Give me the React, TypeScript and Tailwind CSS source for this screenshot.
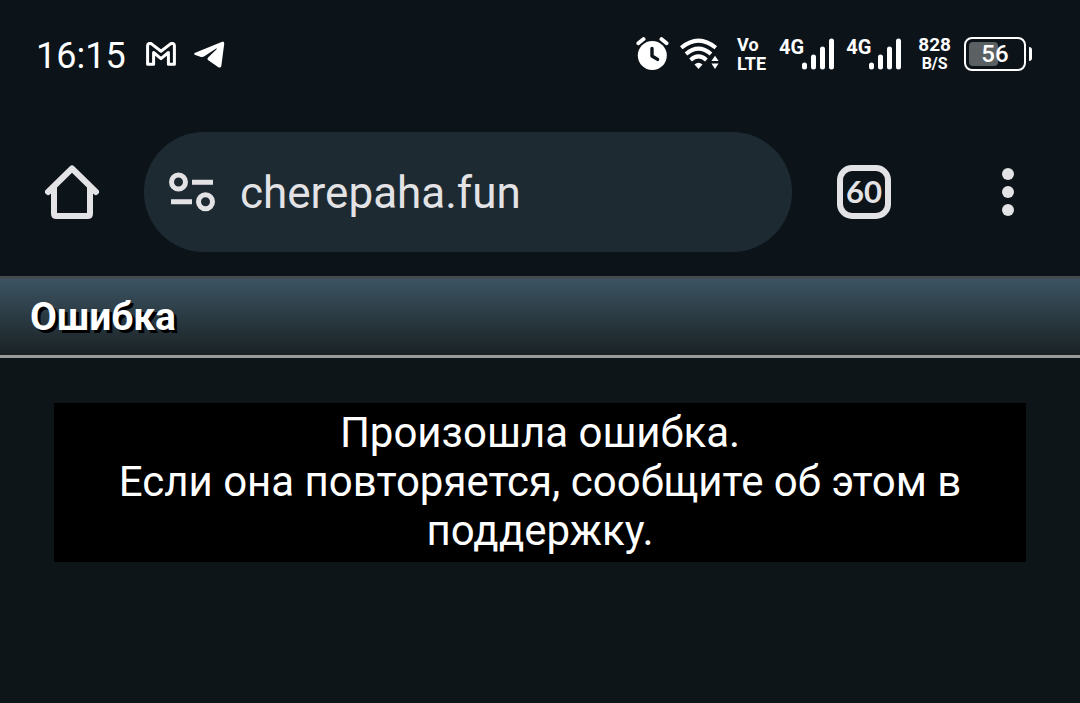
import { useState } from "react";

const GmailIcon = () => (
  <svg width="30" height="24" viewBox="0 0 30 24" fill="none" stroke="white" strokeWidth="3" strokeLinejoin="round">
    <path d="M1.6 3.5V22.3H7.6V10.5L15 16.6L22.4 10.5V22.3H28.4V3.5C28.4 1.4 25.8 .8 24.2 2.1L15 9.3L5.8 2.1C4.2 .8 1.6 1.4 1.6 3.5Z" />
  </svg>
);

const TelegramIcon = () => (
  <svg width="31" height="27" viewBox="0 0 31 27" fill="white">
    <path d="M1.2 11.8L27.6 .9C29.5 .2 30.4 1 30.2 3L27.4 24.4C27.1 26.6 25.6 27 24 25.9L14.3 19.2C13.2 18.3 13.2 17.3 14.1 16.4L22.6 8.2C23.2 7.5 22.5 7.2 21.8 7.7L10.4 15.3C9.2 16.1 8.2 16.2 7 15.9L1.3 14C-.3 13.4-.3 12.4 1.2 11.8Z" />
  </svg>
);

const AlarmIcon = () => (
  <svg width="33" height="34" viewBox="0 0 33 34" fill="none" strokeLinecap="round" strokeLinejoin="round">
    <circle cx="16.3" cy="18.4" r="14.5" fill="white" />
    <path d="M2.3 6.3L7.6 2.1M25.4 2.1L30.6 6.3" stroke="white" strokeWidth="3.8" />
    <path d="M16 11.5V19L21.6 22.4" stroke="#0c141a" strokeWidth="3.4" />
  </svg>
);

const WifiIcon = () => (
  <svg width="39" height="32" viewBox="0 0 39 32" fill="none">
    <g stroke="white" strokeWidth="4">
      <path d="M1.2 9.8Q18.5-4.5 35.8 9.8" />
      <path d="M6 16Q18.5 5.2 31 16" />
      <path d="M10.6 22Q18.5 14.8 26.4 22" />
    </g>
    <path d="M14.5 26.5Q18.5 23.2 22.5 26.5L18.5 31Z" fill="white" />
    <path d="M31.4 23L35 17.8L38.6 23ZM31.4 25.5L35 31L38.6 25.5Z" fill="white" />
  </svg>
);

const SignalIcon = () => (
  <div className="flex items-start">
    <span className="text-[20px] leading-[20px] font-bold">4G</span>
    <svg className="-ml-[2px]" width="32" height="34" viewBox="0 0 32 34" stroke="white" strokeWidth="5" strokeLinecap="round">
      <path d="M2.5 28V30M11.5 20V30M20.5 12V30M29.5 4V30" />
    </svg>
  </div>
);

const BatteryIcon = ({ level }: { level: number }) => (
  <div className="flex items-center gap-[3px]">
    <div className="relative w-[62px] h-[34px] rounded-[8px] border-2 border-white p-[3px]">
      <div className="h-full rounded-[4px] bg-[#5b6063]" style={{ width: `${level}%` }} />
      <span className="absolute inset-0 flex items-center justify-center text-[24px] leading-[24px] font-medium">
        {level}
      </span>
    </div>
    <div className="w-[3px] h-[14px] rounded-r-[3px] bg-white" />
  </div>
);

const StatusBar = () => (
  <div className="flex items-center justify-between h-[108px] pl-9 pr-12 text-white">
    <div className="flex items-center gap-5">
      <span className="pt-[3px] text-[36px] leading-[42px]">16:15</span>
      <div className="flex items-center gap-[18px]">
        <GmailIcon />
        <TelegramIcon />
      </div>
    </div>
    <div className="flex items-center">
      <AlarmIcon />
      <div className="ml-[11px]">
        <WifiIcon />
      </div>
      <div className="ml-[18px] flex flex-col text-[18px] leading-[19px] font-bold">
        <span>Vo</span>
        <span>LTE</span>
      </div>
      <div className="ml-[13px] flex gap-3">
        <SignalIcon />
        <SignalIcon />
      </div>
      <div className="ml-[17px] mr-[13px] flex flex-col items-center font-bold">
        <span className="text-[19px] leading-[20px]">828</span>
        <span className="text-[16px] leading-[18px]">B/S</span>
      </div>
      <BatteryIcon level={56} />
    </div>
  </div>
);

const HomeIcon = () => (
  <svg width="56" height="56" viewBox="0 0 56 56" fill="none" stroke="#e3e3e6" strokeWidth="6" strokeLinecap="round" strokeLinejoin="round">
    <path d="M4 28L28 4.5L52 28" />
    <path d="M10 24V49.5Q10 52 12.5 52H43.5Q46 52 46 49.5V24" />
  </svg>
);

const SiteInfoIcon = () => (
  <svg width="48" height="40" viewBox="0 0 48 40" fill="none" stroke="#e3e3e6" strokeWidth="5">
    <circle cx="10.5" cy="10" r="7" />
    <circle cx="37.5" cy="29.7" r="7" />
    <path d="M24 10.2H45M3 29.7H24" />
  </svg>
);

const MenuIcon = () => (
  <svg width="12" height="48" viewBox="0 0 12 48" fill="#e3e3e6">
    <circle cx="6" cy="6" r="6" />
    <circle cx="6" cy="24" r="6" />
    <circle cx="6" cy="42" r="6" />
  </svg>
);

const Toolbar = () => {
  const [url, setUrl] = useState("cherepaha.fun");

  return (
    <div className="flex items-center h-[168px] text-[#e3e3e6]">
      <button aria-label="Home" className="flex items-center justify-center w-36 h-36 shrink-0">
        <HomeIcon />
      </button>
      <div className="flex items-center flex-1 min-w-0 h-[120px] rounded-full bg-[#1e2a32] px-6">
        <button aria-label="Site information" className="shrink-0 mr-6">
          <SiteInfoIcon />
        </button>
        <input
          type="text"
          aria-label="Address"
          value={url}
          onChange={e => setUrl(e.target.value)}
          className="flex-1 min-w-0 bg-transparent outline-none pt-[2px] text-[44px] leading-[60px]"
        />
      </div>
      <button aria-label="Tabs" className="flex items-center justify-center w-36 h-36 shrink-0">
        <span className="flex items-center justify-center w-[54px] h-[54px] pb-[2px] rounded-[15px] border-[6px] border-[#e3e3e6] font-['Lato',sans-serif] text-[31px] leading-[31px] font-bold">
          60
        </span>
      </button>
      <button aria-label="Menu" className="flex items-center justify-center w-36 h-36 shrink-0">
        <MenuIcon />
      </button>
    </div>
  );
};

export default function App() {
  return (
    <div className="min-h-screen bg-[#0e1518] font-['Roboto',sans-serif]">
      {/* Phone and browser chrome */}
      <header className="bg-[#0c141a]">
        <StatusBar />
        <Toolbar />
      </header>

      {/* Page */}
      <main>
        <div className="border-t-[3px] border-t-[#434b4f] border-b-[3px] border-b-[#999b9b] bg-linear-to-b from-[#3c5463] to-[#1a2225] px-[30px] py-4">
          <h1 className="text-[39px] leading-[44px] font-bold text-white [text-shadow:3px_3px_0_#000]">Ошибка</h1>
        </div>
        <p className="mx-[5%] mt-[45px] bg-black pt-[5px] pb-[7px] px-[6px] text-center text-[42px] leading-[49px] text-white">
          Произошла ошибка.
          <br />
          Если она повторяется, сообщите об этом в поддержку.
        </p>
      </main>
    </div>
  );
}
